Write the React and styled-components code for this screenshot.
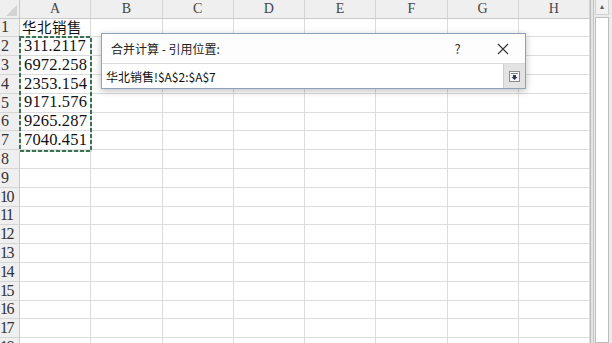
import React from 'react';
import styled, { createGlobalStyle } from 'styled-components';

const GlobalStyle = createGlobalStyle`
  html, body {
    margin: 0;
    padding: 0;
    background: #ffffff;
    overflow: hidden;
  }
  #root {
    width: 612px;
    height: 343px;
  }
`;

const Page = styled.div`
  display: flex;
  width: 612px;
  height: 343px;
  overflow: hidden;
  background: #fff;
`;

const Sheet = styled.div`
  position: relative;
  width: 590px;
  height: 343px;
  overflow: hidden;
`;

const Grid = styled.div`
  display: grid;
  grid-template-columns: 20px repeat(8, 71.25px);
  grid-template-rows: 18.6px;
  grid-auto-rows: 18.8px;
`;

const Corner = styled.div`
  position: relative;
  background: #efefef;
  border-right: 1px solid #c9c9c9;
  border-bottom: 1px solid #c9c9c9;
  &::after {
    content: '';
    position: absolute;
    right: 2px;
    bottom: 2px;
    border-style: solid;
    border-width: 0 0 11px 11px;
    border-color: transparent transparent #d3d3d3 transparent;
  }
`;

const ColHead = styled.div`
  display: flex;
  align-items: center;
  justify-content: center;
  background: #efefef;
  border-right: 1px solid #d4d4d4;
  border-bottom: 1px solid #c9c9c9;
  font-family: "Liberation Serif", serif;
  font-size: 14px;
  line-height: 1;
  color: #444;
  padding-top: 1px;
`;

const RowHead = styled.div`
  display: flex;
  align-items: center;
  background: #efefef;
  border-right: 1px solid #c9c9c9;
  border-bottom: 1px solid #d6d6d6;
  font-family: "Liberation Serif", serif;
  font-size: 16px;
  line-height: 1;
  letter-spacing: -1.5px;
  color: #333;
  padding-left: ${p => (p.$wide ? 0 : 1)}px;
  overflow: hidden;
`;

const Cell = styled.div`
  display: flex;
  align-items: center;
  border-right: 1px solid #dcdcdc;
  border-bottom: 1px solid #dcdcdc;
  padding-left: ${p => (p.$cjk ? 2 : 4)}px;
  font-family: ${p => (p.$cjk ? '"Noto Sans CJK SC", sans-serif' : '"Liberation Serif", serif')};
  font-size: ${p => (p.$cjk ? '14.5px' : '16.5px')};
  letter-spacing: ${p => (p.$cjk ? '0.5px' : '0.15px')};
  line-height: 1;
  color: #111;
  white-space: nowrap;
`;

const Marquee = styled.svg`
  position: absolute;
  left: 19px;
  top: 36px;
`;

const Dialog = styled.div`
  position: absolute;
  left: 101px;
  top: 33px;
  width: 423px;
  height: 54px;
  background: #fff;
  border: 1px solid #8da3bb;
  box-shadow: 0 2px 7px rgba(0, 0, 0, 0.25);
  display: flex;
  flex-direction: column;
  font-family: "Noto Sans CJK SC", "Liberation Sans", sans-serif;
`;

const TitleBar = styled.div`
  height: 29px;
  display: flex;
  align-items: center;
  border-bottom: 1px solid #d9d9d9;
  background: #fdfdfd;
`;

const Title = styled.div`
  flex: 1;
  padding-left: 9px;
  font-size: 12px;
  color: #222;
`;

const TitleButton = styled.div`
  width: 45px;
  height: 29px;
  display: flex;
  align-items: center;
  justify-content: center;
  font-size: 13px;
  color: #333;
`;

const InputRow = styled.div`
  flex: 1;
  display: flex;
  align-items: stretch;
`;

const RefInput = styled.div`
  flex: 1;
  display: flex;
  align-items: center;
  padding-left: 4px;
  font-size: 12px;
  color: #111;
`;

const CollapseButton = styled.div`
  width: 21px;
  display: flex;
  align-items: center;
  justify-content: center;
  background: #e3e3e3;
  border-left: 1px solid #cfcfcf;
`;

const Divider = styled.div`
  width: 4px;
  height: 343px;
  background: #e4e4e4;
  border-left: 1px solid #bcbcbc;
  box-sizing: border-box;
  display: flex;
  justify-content: center;
  &::after {
    content: '';
    width: 1px;
    margin-left: 1px;
    background: #c4c4c4;
  }
`;

const ScrollBar = styled.div`
  width: 18px;
  height: 343px;
  background: #ebebeb;
  display: flex;
  flex-direction: column;
  padding: 0 3px 0 1px;
  box-sizing: border-box;
  gap: 2px;
`;

const ArrowButton = styled.div`
  height: 15px;
  display: flex;
  align-items: center;
  justify-content: center;
  background: #f2f2f2;
  border: 1px solid #d0d0d0;
  border-top: none;
  box-sizing: border-box;
  color: #606060;
  font-size: 7px;
`;

const Thumb = styled.div`
  flex: 1;
  background: #fff;
  border: 1px solid #bdbdbd;
`;

const cols = ['A', 'B', 'C', 'D', 'E', 'F', 'G', 'H'];
const rows = Array.from({ length: 18 }, (_, i) => i + 1);
const colA = ['华北销售', '311.2117', '6972.258', '2353.154', '9171.576', '9265.287', '7040.451'];

const CloseIcon = () => (
  <svg width="12" height="12" viewBox="0 0 12 12">
    <path d="M1 1 L11 11 M11 1 L1 11" stroke="#333" strokeWidth="1.1" fill="none" />
  </svg>
);

const CollapseIcon = () => (
  <svg width="11" height="11" viewBox="0 0 11 11">
    <rect x="0.5" y="0.5" width="10" height="10" fill="#f6f6f6" stroke="#8c8c8c" />
    <rect x="2" y="2" width="7" height="1" fill="#7a8799" />
    <path d="M4 4 H7 V6 H8.5 L5.5 9 L2.5 6 H4 Z" fill="#2f3c52" />
  </svg>
);

export default function App() {
  return (
    <>
      <GlobalStyle />
      <Page>
        <Sheet>
          <Grid>
            <Corner />
            {cols.map(c => <ColHead key={c}>{c}</ColHead>)}
            {rows.map(r => (
              <React.Fragment key={r}>
                <RowHead $wide={r > 9}>{r}</RowHead>
                {cols.map((c, ci) => {
                  const v = ci === 0 ? colA[r - 1] : undefined;
                  return <Cell key={c} $cjk={r === 1}>{v}</Cell>;
                })}
              </React.Fragment>
            ))}
          </Grid>

          <Marquee width="73" height="116" viewBox="0 0 73 116">
            <rect x="1" y="1" width="71" height="114" fill="none" stroke="#cfe3d6" strokeWidth="2" />
            <rect x="1" y="1" width="71" height="114" fill="none" stroke="#3f6f55" strokeWidth="2" strokeDasharray="4 2" />
          </Marquee>

          <Dialog>
            <TitleBar>
              <Title>合并计算 - 引用位置:</Title>
              <TitleButton>?</TitleButton>
              <TitleButton><CloseIcon /></TitleButton>
            </TitleBar>
            <InputRow>
              <RefInput>华北销售!$A$2:$A$7</RefInput>
              <CollapseButton><CollapseIcon /></CollapseButton>
            </InputRow>
          </Dialog>
        </Sheet>
        <Divider />
        <ScrollBar>
          <ArrowButton>▲</ArrowButton>
          <Thumb />
        </ScrollBar>
      </Page>
    </>
  );
}
